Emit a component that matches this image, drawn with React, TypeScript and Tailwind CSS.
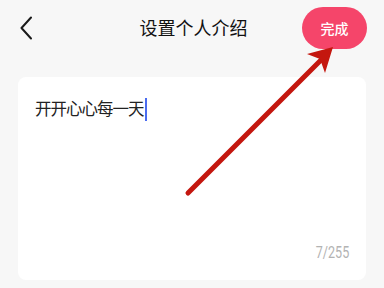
import React from 'react';

export default function App() {
  return (
    <div
      className="relative h-[288px] w-[384px] overflow-hidden bg-[#f7f7f7]"
      style={{ fontFamily: '"Noto Sans", "Noto Sans CJK SC", sans-serif' }}
    >
      <div className="grid grid-cols-[1fr_auto_1fr] items-center pt-[7px] pl-[20px] pr-[17px]">
        <div className="flex items-center">
          <svg width="12" height="24" viewBox="0 0 12 24" fill="none">
            <path d="M11 1.5 L1.5 12 L11 22.5" stroke="#1a1a1a" strokeWidth="2" strokeLinecap="round" strokeLinejoin="round" />
          </svg>
        </div>
        <h1 className="text-[18px] leading-none text-[#111]">设置个人介绍</h1>
        <div className="flex justify-end">
          <button className="h-[42px] w-[65px] rounded-full bg-[#f5456a] text-[14px] font-medium text-white">完成</button>
        </div>
      </div>

      <div className="mx-[18px] mt-[28px] flex h-[203px] flex-col rounded-[8px] bg-white px-[17px] pt-[20px] pb-[19px]">
        <div className="flex items-center text-[16.5px] leading-[24px] tracking-[-1px] text-[#222]">
          <span>开开心心每一天</span>
          <span className="ml-[1px] inline-block h-[23px] w-[2px] bg-[#4a6cf0]" />
        </div>
        <div className="mt-auto flex justify-end">
          <span
            className="inline-block origin-right scale-x-[0.74] text-[17px] leading-none text-[#b3b3b3]"
            style={{ fontFamily: 'Roboto, "Liberation Sans", sans-serif' }}
          >
            7/255
          </span>
        </div>
      </div>

      {/* annotation arrow */}
      <svg className="pointer-events-none absolute inset-0" width="384" height="288" viewBox="0 0 384 288">
        <line x1="188" y1="193" x2="322" y2="59" stroke="#c4170f" strokeWidth="5" strokeLinecap="round" />
        <path d="M333 47 L307 54 L320 59 L325 73 Z" fill="#c4170f" />
      </svg>
    </div>
  );
}
